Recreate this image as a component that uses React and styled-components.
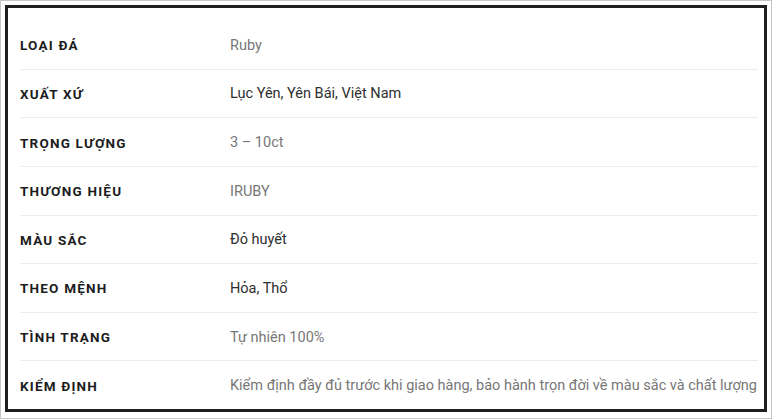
import React from "react";
import styled, { createGlobalStyle } from "styled-components";

const GlobalStyle = createGlobalStyle`
  html, body {
    margin: 0;
    padding: 0;
    background: #fff;
  }
  body {
    font-family: Roboto, "Liberation Sans", Arial, sans-serif;
  }
`;

const Frame = styled.div`
  width: 772px;
  height: 419px;
  box-sizing: border-box;
  border: 1px solid #c6c6c6;
  padding: 4px 4px 6px 4px;
  background: #fff;
`;

const Box = styled.div`
  height: 100%;
  box-sizing: border-box;
  border: 3px solid #1f1f1f;
  padding: 13px 6px 0 12px;
  display: flex;
  flex-direction: column;
`;

const Row = styled.div`
  flex: 1;
  display: grid;
  grid-template-columns: 210px 1fr;
  align-items: center;
  padding-top: 1px;
  border-top: ${props => (props.first ? "none" : "1px solid #ececec")};
`;

const Label = styled.div`
  font-size: 13.5px;
  font-weight: 700;
  letter-spacing: 1.2px;
  color: #1c1c1c;
  text-transform: uppercase;
`;

const Value = styled.div`
  font-size: 14.5px;
  color: ${props => (props.dark ? "#2e2e2e" : "#777")};
  white-space: nowrap;
`;

const specs = [
  { label: "Loại đá", value: "Ruby" },
  { label: "Xuất xứ", value: "Lục Yên, Yên Bái, Việt Nam", dark: true },
  { label: "Trọng lượng", value: "3 – 10ct" },
  { label: "Thương hiệu", value: "IRUBY" },
  { label: "Màu sắc", value: "Đỏ huyết", dark: true },
  { label: "Theo mệnh", value: "Hỏa, Thổ", dark: true },
  { label: "Tình trạng", value: "Tự nhiên 100%" },
  {
    label: "Kiểm định",
    value:
      "Kiểm định đầy đủ trước khi giao hàng, bảo hành trọn đời về màu sắc và chất lượng"
  }
];

export default () => {
  return (
    <>
      <GlobalStyle />
      <Frame>
        <Box>
          {specs.map((spec, index) => (
            <Row key={spec.label} first={index === 0}>
              <Label>{spec.label}</Label>
              <Value dark={spec.dark}>{spec.value}</Value>
            </Row>
          ))}
        </Box>
      </Frame>
    </>
  );
};
